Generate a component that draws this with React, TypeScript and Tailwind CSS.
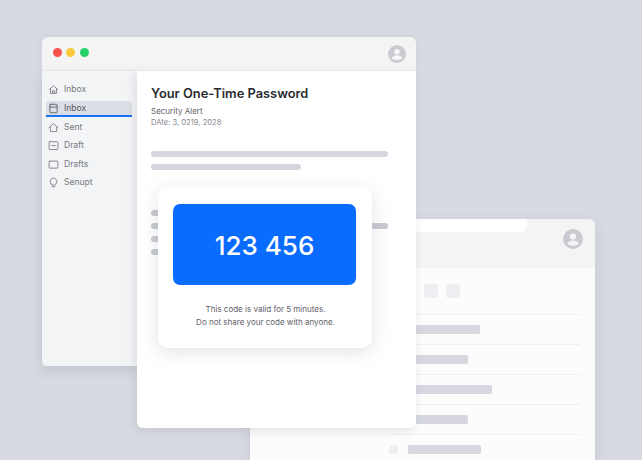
const SIDEBAR = [
  { label: "Inbox", d: "M1.5 6.5 6.5 2l5 4.5M3 5.5V11h7V5.5M5.2 11V8h2.6v3" },
  { label: "Inbox", d: "M3 1.500h7a.8.8 0 0 1 .8.8v8.400a.8.8 0 0 1-.8.8H3a.8.8 0 0 1-.8-.8V2.300a.8.8 0 0 1 .8-.8ZM2.200 4.800h8.600", active: true },
  { label: "Sent", d: "M1.200 6.800 6.500 1.800l5.300 5M2.800 5.800v5.400h7.400V5.800" },
  { label: "Draft", d: "M2.300 2h8.400a1 1 0 0 1 1 1v7.300a1 1 0 0 1-1 1H2.300a1 1 0 0 1-1-1V3a1 1 0 0 1 1-1ZM4.500 6.500h4" },
  { label: "Drafts", d: "M2.300 2.500h8.400a1 1 0 0 1 1 1v6.300a1 1 0 0 1-1 1H2.300a1 1 0 0 1-1-1V3.500a1 1 0 0 1 1-1Z" },
  { label: "Senupt", d: "M3.800 8.300a4 4 0 1 1 5.400 0c-.4.400-.6.800-.6 1.200H4.400c0-.400-.2-.800-.6-1.200ZM4.800 11.500h3.400" },
];

const ROWS = ["w-[72px]", "w-[60px]", "w-[84px]", "w-[60px]"];

function Avatar({ size }: { size: string }) {
  return (
    <svg viewBox="0 0 20 20" className={size}>
      <circle cx="10" cy="10" r="10" fill="#c9cbd1" />
      <circle cx="10" cy="7.600" r="3.100" fill="#f6f6f7" />
      <path d="M4.300 15.100c.6-2.600 2.800-3.700 5.700-3.700s5.100 1.100 5.700 3.700c-1.300 1.100-3.400 1.600-5.700 1.600s-4.400-.5-5.700-1.600Z" fill="#f6f6f7" />
    </svg>
  );
}

function BackWindow() {
  return (
    <div className="absolute left-[250px] top-[219px] h-[260px] w-[345px] overflow-hidden rounded-t-[6px] bg-[#fcfcfd] shadow-[0_4px_14px_rgba(120,125,140,0.18)]">
      <div className="relative flex h-[49px] items-start justify-end bg-[#f4f4f5] pr-[12px] pt-[10px]">
        <div className="absolute left-0 top-0 h-[13px] w-[277px] rounded-br-[6px] bg-white" />
        <Avatar size="h-[20px] w-[20px]" />
      </div>
      <div className="flex h-[46px] items-center justify-start gap-[8px] pl-[174px]">
        <div className="h-[14px] w-[14px] rounded-[3px] bg-[#eeeff2]" />
        <div className="h-[14px] w-[14px] rounded-[3px] bg-[#eeeff2]" />
      </div>
      <div className="ml-[138px] w-[192px]">
        {ROWS.map((w, i) => (
          <div key={i} className="flex h-[30px] items-center border-t border-[#eff0f2] pl-[20px]">
            <div className={`h-[9px] rounded-[2px] bg-[#d6d7df] ${w}`} />
          </div>
        ))}
        <div className="flex h-[30px] items-center gap-[10px] border-t border-[#eff0f2] pl-[1px]">
          <div className="h-[9px] w-[9px] rounded-[2px] bg-[#eeeff2]" />
          <div className="h-[9px] w-[73px] rounded-[2px] bg-[#d6d7df]" />
        </div>
      </div>
    </div>
  );
}

function Sidebar() {
  return (
    <div className="flex h-[295px] w-[94.500px] flex-col rounded-bl-[6px] bg-[#f3f4f6] pl-[4px] pr-[5px] pt-[9.500px]">
      {SIDEBAR.map((item, i) => (
        <div
          key={i}
          className={
            item.active
              ? "mb-[1.500px] mt-[2px] flex h-[16px] items-center gap-[6px] rounded-t-[3px] border-b-2 border-[#1a73f0] bg-[#dcdee5] pl-[2px] text-[#55585f]"
              : "mb-[1.500px] flex h-[17px] items-center gap-[6px] pl-[2px] text-[#77797f]"
          }
        >
          <svg viewBox="0 0 13 13" fill="none" stroke="currentColor" strokeWidth="1" className="h-[11px] w-[11px] shrink-0">
            <path d={item.d} strokeLinejoin="round" strokeLinecap="round" />
          </svg>
          <span className="-ml-[1px] text-[8.500px] leading-none">{item.label}</span>
        </div>
      ))}
    </div>
  );
}

function MainPanel() {
  return (
    <div className="relative h-[357px] w-[279.500px] rounded-b-[6px] bg-white pl-[14.500px] pt-[15px] shadow-[-2px_3px_10px_rgba(120,125,140,0.2)]">
      <h1 className="text-[12.850px] font-semibold leading-[16px] text-[#2a2b2f]">Your One-Time Password</h1>
      <p className="mt-[4px] text-[8px] leading-[10px] text-[#5f6167]">Security Alert</p>
      <p className="mt-[2px] text-[7.600px] leading-[10px] text-[#85878d]">DAte: 3, 0219, 2028</p>
      <div className="mt-[23px] flex flex-col gap-[7px]">
        <div className="h-[6px] w-[237px] rounded-[3px] bg-[#d5d6de]" />
        <div className="h-[6px] w-[150px] rounded-[3px] bg-[#d5d6de]" />
      </div>
      <div className="mt-[40px] flex flex-col gap-[7px]">
        <div className="h-[6px] w-[100px] rounded-[3px] bg-[#c9cad1]" />
        <div className="h-[6px] w-[237px] rounded-[3px] bg-[#c9cad1]" />
        <div className="h-[6px] w-[100px] rounded-[3px] bg-[#c9cad1]" />
        <div className="h-[6px] w-[100px] rounded-[3px] bg-[#c9cad1]" />
      </div>
      <OtpCard />
    </div>
  );
}

function OtpCard() {
  return (
    <div className="absolute left-[21px] top-[116px] flex h-[161px] w-[214px] flex-col items-center rounded-[10px] bg-white pt-[17px] shadow-[0_4px_18px_rgba(110,115,130,0.2)]">
      <div className="flex h-[81px] w-[183px] items-center justify-center rounded-[7px] bg-[#0a6cff] pt-[2px] text-[26px] font-medium text-white">
        123 456
      </div>
      <p className="mt-[18px] pl-[2px] text-center text-[8px] leading-[12.500px] text-[#5f6167]">
        This code is valid for 5 minutes.
        <br />
        Do not share your code with anyone.
      </p>
    </div>
  );
}

export default function App() {
  return (
    <div className="relative h-[460px] w-[642px] overflow-hidden bg-[#d8dae2] font-['Inter',sans-serif]">
      <BackWindow />
      <div className="absolute left-[42px] top-[37px] w-[374px]">
        <div className="flex h-[34px] items-center justify-between rounded-t-[6px] border-b border-[#ecedef] bg-[#f4f4f5] pl-[10.500px] pr-[10px] shadow-[0_-1px_6px_rgba(120,125,140,0.1)]">
          <div className="mb-[2px] flex gap-[4.500px]">
            <div className="h-[9px] w-[9px] rounded-full bg-[#f9534f]" />
            <div className="h-[9px] w-[9px] rounded-full bg-[#fbcb3c]" />
            <div className="h-[9px] w-[9px] rounded-full bg-[#27cf6b]" />
          </div>
          <Avatar size="h-[18px] w-[18px]" />
        </div>
        <div className="flex items-start">
          <div className="shadow-[0_4px_10px_rgba(120,125,140,0.25)]">
            <Sidebar />
          </div>
          <MainPanel />
        </div>
      </div>
    </div>
  );
}
